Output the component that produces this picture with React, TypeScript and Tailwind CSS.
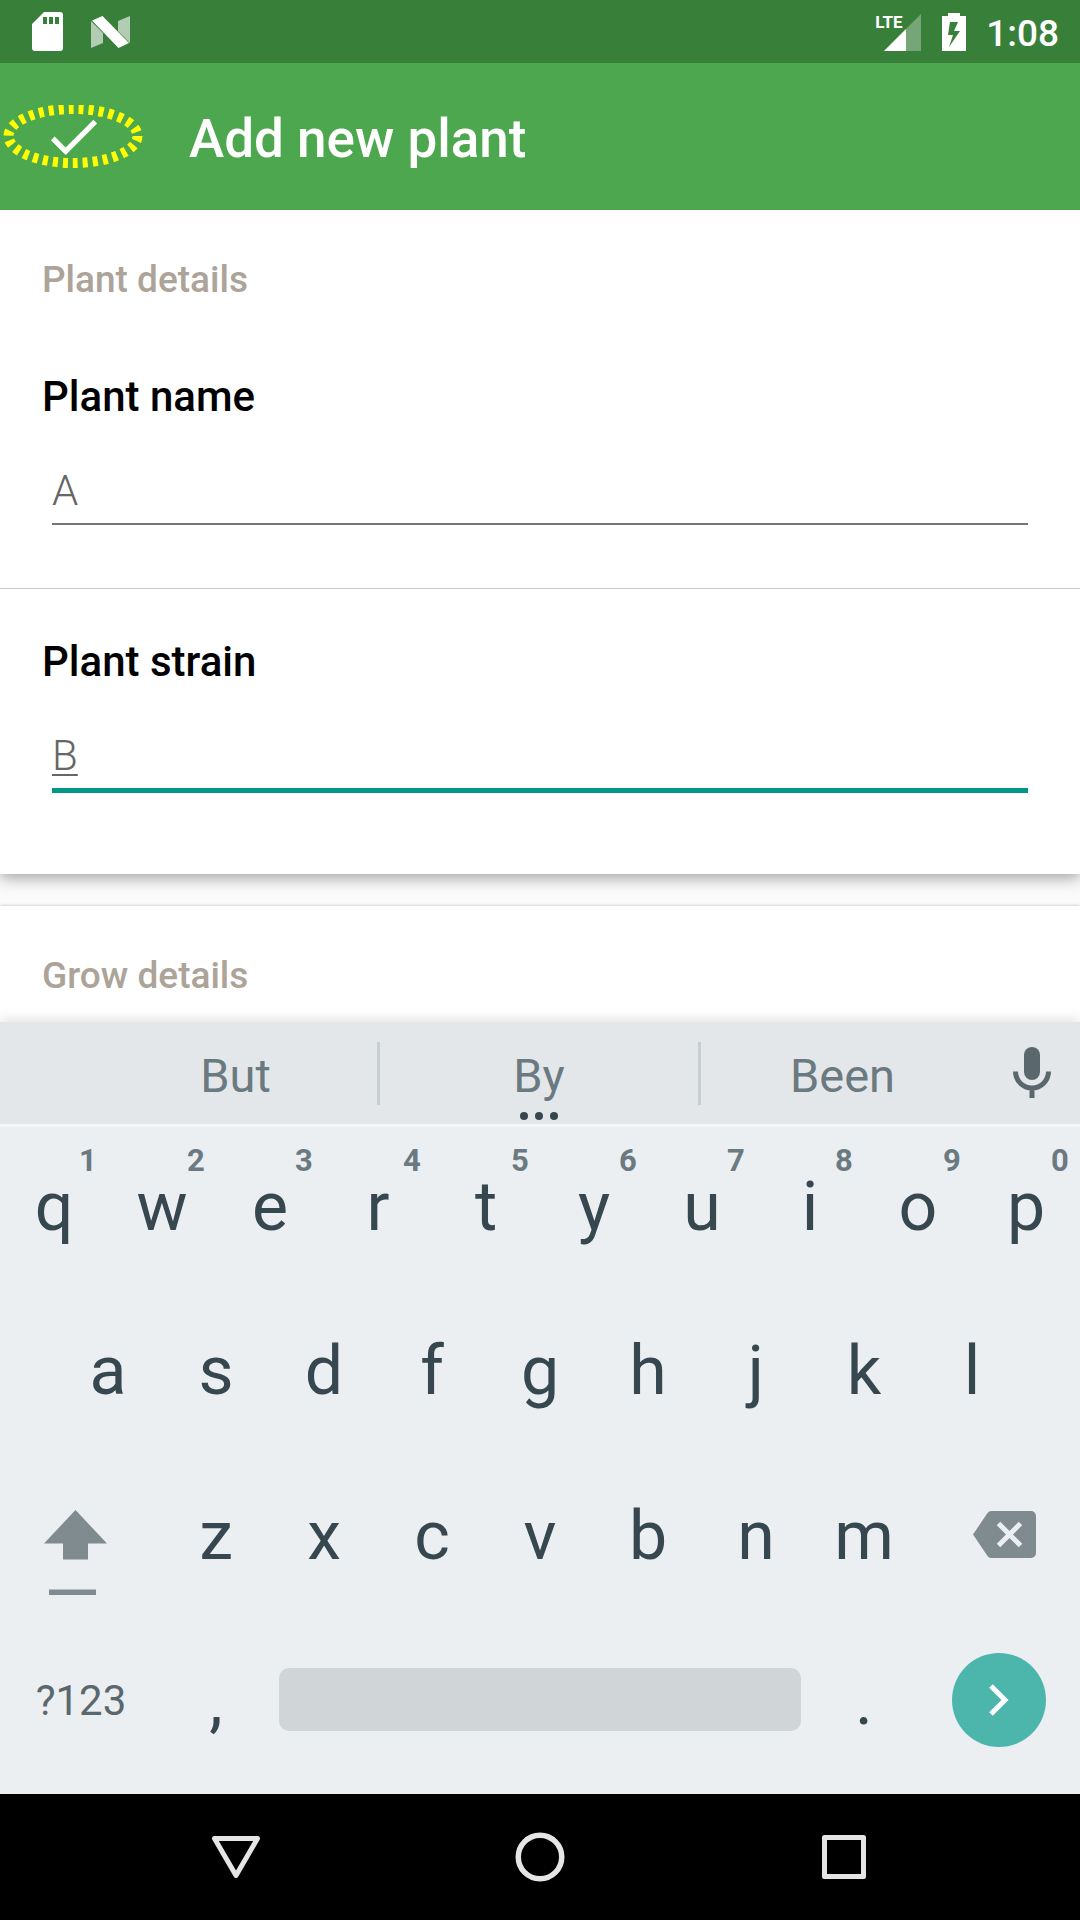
import React, { useState } from "react";

const topRow = ["q", "w", "e", "r", "t", "y", "u", "i", "o", "p"];
const homeRow = ["a", "s", "d", "f", "g", "h", "j", "k", "l"];
const bottomRow = ["z", "x", "c", "v", "b", "n", "m"];

function StatusBar() {
  return (
    <div className="flex h-[63px] items-center justify-between bg-[#387f3a] pl-8 pr-[21px] text-white">
      <div className="flex items-center gap-7">
        <svg width="31" height="39" viewBox="0 0 31 39" aria-label="SD card">
          <path
            fillRule="evenodd"
            fill="#fff"
            d="M12 0H28a3 3 0 0 1 3 3V36a3 3 0 0 1-3 3H3a3 3 0 0 1-3-3V12ZM11 5V12H15V5ZM17 5V12H21V5ZM23 5V12H27V5Z"
          />
        </svg>
        <svg width="39" height="32" viewBox="0 0 39 32" aria-label="Android N">
          <path fill="#b3cdb4" d="M0 5 12 17V27L0 32ZM27 5 39 0V27L27 15Z" />
          <path fill="#fff" d="M1 4.500 11.500 0 38 27 27.500 32Z" />
        </svg>
      </div>
      <div className="flex items-center">
        <div className="relative mr-[21px] flex h-[38px] w-[46px] items-end justify-end">
          <span className="absolute left-0 top-0 text-[17px] font-bold leading-[18px]">LTE</span>
          <svg width="37" height="37" viewBox="0 0 37 37" aria-label="Signal">
            <path fill="#76a677" d="M37 0V37H0Z" />
            <path fill="#fff" d="M22 15V37H0Z" />
          </svg>
        </div>
        <svg className="mr-5" width="24" height="38" viewBox="0 0 24 38" aria-label="Battery charging">
          <path
            fillRule="evenodd"
            fill="#fff"
            d="M6 0H18V3H24V38H0V3H6ZM8 9 6 22H11L7 34 18 18H12L16 9Z"
          />
        </svg>
        <span className="pt-1 text-[37px] font-medium leading-[44px]">1:08</span>
      </div>
    </div>
  );
}

function AppBar() {
  return (
    <header className="relative z-10 flex h-[147px] items-center bg-[#4ca74e] text-white">
      <button type="button" aria-label="Save" className="relative flex h-[63px] w-[189px] items-center pl-[42px]">
        <svg width="63" height="63" viewBox="0 0 24 24">
          <path fill="#fff" d="M9 16.170 4.830 12l-1.420 1.410L9 19 21 7l-1.410-1.410z" />
        </svg>
        <svg className="absolute left-0 top-0" width="146" height="64" viewBox="0 0 146 64">
          <ellipse cx="73" cy="31" rx="64.500" ry="27" fill="none" stroke="#ff0" strokeWidth="10" strokeDasharray="5 5" />
        </svg>
      </button>
      <h1 className="pt-1 text-[53px] font-medium leading-[62px]">Add new plant</h1>
    </header>
  );
}

function KeyButton({ label }: { label: string }) {
  return (
    <button type="button" className="flex items-center justify-center pt-[2px] text-[68px] leading-[80px]">
      {label}
    </button>
  );
}

function HintedKeyButton({ label, hint }: { label: string; hint: string }) {
  return (
    <button type="button" className="relative flex items-center justify-center text-[68px] leading-[80px]">
      {label}
      <span className="absolute right-0 top-[15px] w-10 text-center text-[31px] font-bold leading-[38px] text-[#6b7980]">
        {hint}
      </span>
    </button>
  );
}

function Keyboard() {
  return (
    <div className="relative bg-[#ebeff2] text-[#37474f] shadow-[0_-4px_10px_rgba(0,0,0,0.100)]">
      <div className="grid h-[102px] grid-cols-[94px_1fr_3px_318px_3px_1fr_96px] items-center bg-[#e3e7ea] text-[47px] leading-[56px] text-[#6b7980]">
        <span />
        <button type="button" className="pt-[6px]">But</button>
        <span className="h-[63px] bg-[#c9ced1]" />
        <button type="button" className="relative pt-[6px]">
          By
          <svg className="absolute inset-x-0 top-[69px] mx-auto" width="40" height="10" viewBox="0 0 40 10">
            <g fill="#37474f">
              <circle cx="5" cy="5" r="4" />
              <circle cx="20" cy="5" r="4" />
              <circle cx="35" cy="5" r="4" />
            </g>
          </svg>
        </button>
        <span className="h-[63px] bg-[#c9ced1]" />
        <button type="button" className="pt-[6px]">Been</button>
        <button type="button" aria-label="Voice input" className="flex justify-center">
          <svg width="38" height="52" viewBox="0 0 38 52">
            <rect x="11" y="0" width="16" height="33" rx="8" fill="#5a686e" />
            <path d="M2.500 24.500a16.500 16.500 0 0 0 33 0M19 41V51" fill="none" stroke="#5a686e" strokeWidth="5" />
          </svg>
        </button>
      </div>
      <div className="h-[3px] bg-[#f5f7f8]" />
      <div className="grid h-40 grid-cols-10">
        {topRow.map((k, i) => (
          <HintedKeyButton key={k} label={k} hint={String((i + 1) % 10)} />
        ))}
      </div>
      <div className="grid h-[165px] grid-cols-9 px-[5%]">
        {homeRow.map((k) => (
          <KeyButton key={k} label={k} />
        ))}
      </div>
      <div className="grid h-[165px] grid-cols-[3fr_repeat(7,2fr)_3fr]">
        <button type="button" aria-label="Shift" className="flex items-center pl-11">
          <svg width="63" height="134" viewBox="0 0 63 134">
            <path fill="#808b8f" d="M31.500 42 63 75.500H44V91.500H19V75.500H0ZM5 121.500H52V127H5Z" />
          </svg>
        </button>
        {bottomRow.map((k) => (
          <KeyButton key={k} label={k} />
        ))}
        <button type="button" aria-label="Backspace" className="flex items-center justify-end pr-11">
          <svg width="63" height="47" viewBox="0 0 63 47">
            <path fill="#808b8f" d="M18 0H58a5 5 0 0 1 5 5V42a5 5 0 0 1-5 5H18Q16 47 14.500 45L0 23.500 14.500 2Q16 0 18 0Z" />
            <path d="M25.500 12.500 47.500 34.500M47.500 12.500 25.500 34.500" stroke="#ebeff2" strokeWidth="5" />
          </svg>
        </button>
      </div>
      <div className="grid h-[165px] grid-cols-[3fr_2fr_10fr_2fr_3fr] items-center">
        <button type="button" className="pt-[2px] text-[42px] leading-[50px] text-[#5a686e]">?123</button>
        <KeyButton label="," />
        <button type="button" aria-label="Space" className="mx-[9px] h-[63px] rounded-[10px] bg-[#d0d5d8]" />
        <KeyButton label="." />
        <button
          type="button"
          aria-label="Next"
          className="flex size-[94px] items-center justify-center justify-self-center rounded-full bg-[#4db6ac]"
        >
          <svg width="22" height="34" viewBox="0 0 22 34">
            <path d="M3 3 17 17 3 31" fill="none" stroke="#fff" strokeWidth="5" />
          </svg>
        </button>
      </div>
      <div className="h-3" />
    </div>
  );
}

function NavBar() {
  return (
    <nav className="flex h-[126px] items-center justify-center gap-[254px] bg-black">
      <button type="button" aria-label="Back">
        <svg width="50" height="50" viewBox="0 0 50 50" fill="none" stroke="#e5e5e5" strokeWidth="5" strokeLinejoin="round">
          <path d="M3.500 6.500H46.500L25 43.500Z" />
        </svg>
      </button>
      <button type="button" aria-label="Home">
        <svg width="50" height="50" viewBox="0 0 50 50" fill="none" stroke="#e5e5e5" strokeWidth="5.500">
          <circle cx="25" cy="25" r="21.750" />
        </svg>
      </button>
      <button type="button" aria-label="Overview">
        <svg width="50" height="50" viewBox="0 0 50 50" fill="none" stroke="#e5e5e5" strokeWidth="5" strokeLinejoin="round">
          <rect x="5.500" y="5.500" width="39" height="39" />
        </svg>
      </button>
    </nav>
  );
}

export default function App() {
  const [name, setName] = useState("A");
  const [strain, setStrain] = useState("B");
  return (
    <div className="flex min-h-screen flex-col bg-[#fafafa] font-['Roboto',sans-serif]">
      <StatusBar />
      <AppBar />
      <main className="flex flex-1 flex-col gap-8">
        <section className="bg-white shadow-[0_4px_14px_rgba(0,0,0,0.350)]">
          <div className="border-b border-[#c8c8c8] px-[42px] pb-[63px] pt-[46px]">
            <h2 className="text-[37px] font-medium leading-[48px] text-[#aca399]">Plant details</h2>
            <label htmlFor="plant-name" className="mt-[65px] block text-[42px] font-medium leading-[56px] text-black">
              Plant name
            </label>
            <div className="mt-[38px] px-[10px]">
              <input
                id="plant-name"
                value={name}
                onChange={(e) => setName(e.target.value)}
                className="block h-[62px] w-full border-b-2 border-[#757575] pb-[6px] text-[42px] font-light leading-[54px] text-[#666666] outline-none"
              />
            </div>
          </div>
          <div className="px-[42px] pb-[81px] pt-[45px]">
            <label htmlFor="plant-strain" className="block text-[42px] font-medium leading-[56px] text-black">
              Plant strain
            </label>
            <div className="mt-[38px] px-[10px]">
              <input
                id="plant-strain"
                value={strain}
                onChange={(e) => setStrain(e.target.value)}
                className="block h-[65px] w-full border-b-[5px] border-[#009688] pb-[6px] text-[42px] font-light leading-[54px] text-[#666666] underline decoration-2 underline-offset-4 outline-none"
              />
            </div>
          </div>
        </section>
        <section className="flex-1 bg-white px-[42px] pt-[46px] shadow-[0_0_3px_rgba(0,0,0,0.250)]">
          <h2 className="text-[37px] font-medium leading-[48px] text-[#aca399]">Grow details</h2>
        </section>
      </main>
      <Keyboard />
      <NavBar />
    </div>
  );
}
